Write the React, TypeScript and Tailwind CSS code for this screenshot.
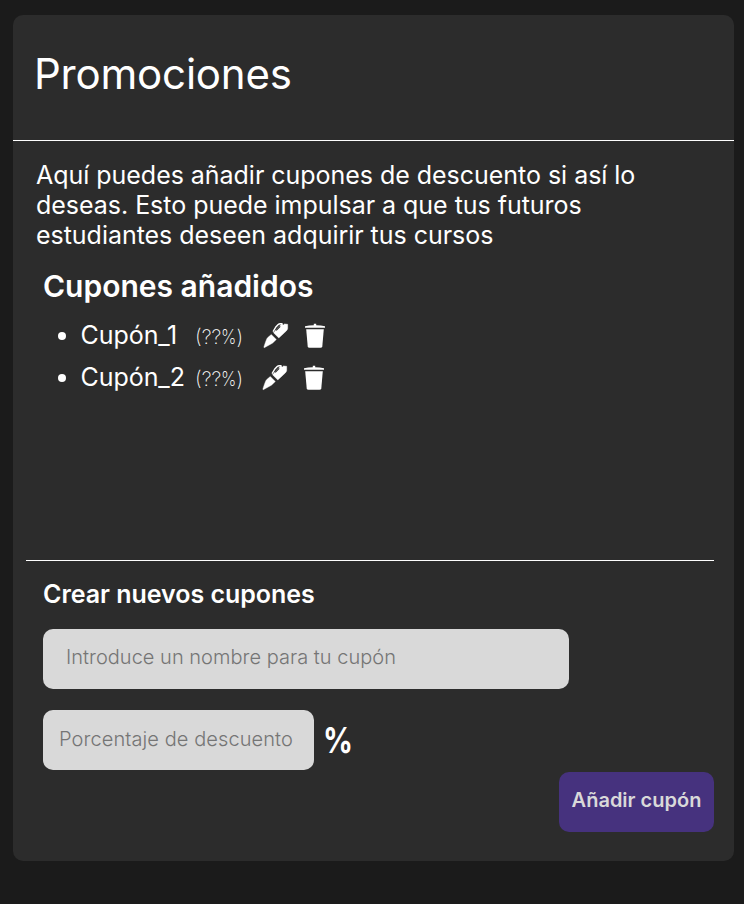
function PenIcon() {
  return (
    <svg width="26" height="28" viewBox="0 0 26 28" fill="white" stroke="white" strokeWidth=".4" strokeLinejoin="round">
      <path d="M1.300 26.700 L0.800 26.200 L2.200 21.900 L3.500 18.400 Q4 17.200 5 16.300 L8.300 13.500 L13.300 18.500 L10.500 21.200 Q9.500 22.300 8 23 L3 25.800 Z" />
      <path d="M10.500 11.700 L18.800 2.700 L20.300 4 L21.500 2.900 L24.700 3.300 V7.400 Q24.500 8.700 23.300 9.900 L15.800 17 Z" />
      <path d="M10.100 10.700 L12.800 6 L15.200 3.500 Q16 2.800 17.200 2.800 L19.500 2.800" fill="none" strokeWidth="1.500" />
      <path d="M13.200 9.300 L17.200 5.300" fill="none" stroke="#2c2c2c" strokeWidth="1.200" />
    </svg>
  );
}

function TrashIcon() {
  return (
    <svg width="22" height="28" viewBox="0 0 22 28" fill="white">
      <path d="M1 5.200 Q5 4.400 9.800 4.200 V2.800 H12.200 V4.200 Q17 4.400 21 5.200 V6.800 H1 Z" />
      <path d="M2.200 8.300 H19.800 L18.300 25.200 Q18.100 26.800 16.500 26.800 H5.500 Q3.900 26.800 3.700 25.200 Z" />
    </svg>
  );
}

function CouponRow({ name, shifted }: { name: string; shifted?: boolean }) {
  return (
    <li className="flex h-[42px] items-center">
      <span className="ml-[14.5px] mt-px size-2 rounded-full bg-white" />
      <span className="ml-[15px] w-[114.5px] text-[25px] leading-[30px] tracking-[-0.05px]">{name}</span>
      <span className="flex w-[68px] pt-[3px] text-[20px] font-[250] leading-6">
        <span>(??</span>
        <span className="-mr-[2.5px] origin-left scale-x-[.86]">%</span>
        <span>)</span>
      </span>
      <button className={shifted ? "-ml-px" : ""} aria-label="Editar"><PenIcon /></button>
      <button className="ml-[15px]" aria-label="Eliminar"><TrashIcon /></button>
    </li>
  );
}

export default function App() {
  return (
    <div className="h-[904px] w-[744px] bg-[#1b1b1b] pl-[13px] pt-[15px] font-['Inter',sans-serif] text-white">
      <main className="flex h-[846px] w-[721px] flex-col rounded-[10px] bg-[#2c2c2c]">
        <header className="h-[126px] border-b border-white pl-[21px] pt-[33px]">
          <h1 className="text-[42px] font-normal leading-[51px] tracking-[-0.2px]">Promociones</h1>
        </header>
        <p className="ml-[23px] mt-[19px] whitespace-nowrap text-[25px] font-normal leading-[30px] tracking-[-0.03px]">
          Aquí puedes añadir cupones de descuento si así lo<br />deseas. Esto puede impulsar a que tus futuros<br />estudiantes deseen adquirir tus cursos
        </p>
        <section className="ml-[30px] mt-[18px] h-[292px]">
          <h2 className="text-[30px] font-semibold leading-9">Cupones añadidos</h2>
          <ul className="mt-[10px]">
            <CouponRow name="Cupón_1" />
            <CouponRow name="Cupón_2" shifted />
          </ul>
        </section>
        <section className="ml-[13px] mr-5 flex flex-1 flex-col border-t border-white pl-[17px] pt-[18px]">
          <h3 className="text-[25px] font-semibold leading-[30px] tracking-[-0.03px]">Crear nuevos cupones</h3>
          <input className="mt-[20px] h-[60px] w-[526px] rounded-[10px] bg-[#d9d9d9] pb-1 pl-[23px] text-[20px] font-light tracking-[0.02px] placeholder:text-[#757575]" placeholder="Introduce un nombre para tu cupón" />
          <div className="mt-[21px] flex h-[60px] items-center">
            <input className="h-[60px] w-[271px] rounded-[10px] bg-[#d9d9d9] pb-[3px] pl-[16px] text-[20px] font-light tracking-[0.09px] placeholder:text-[#757575]" placeholder="Porcentaje de descuento" />
            <span className="ml-[9px] origin-left scale-x-[.82] text-[36px] font-bold">%</span>
          </div>
          <button className="mt-[2px] h-[60px] w-[155px] self-end rounded-[10px] bg-[#46327e] pb-1 text-[20px] font-semibold text-[#d9d9d9]">Añadir cupón</button>
        </section>
      </main>
    </div>
  );
}
